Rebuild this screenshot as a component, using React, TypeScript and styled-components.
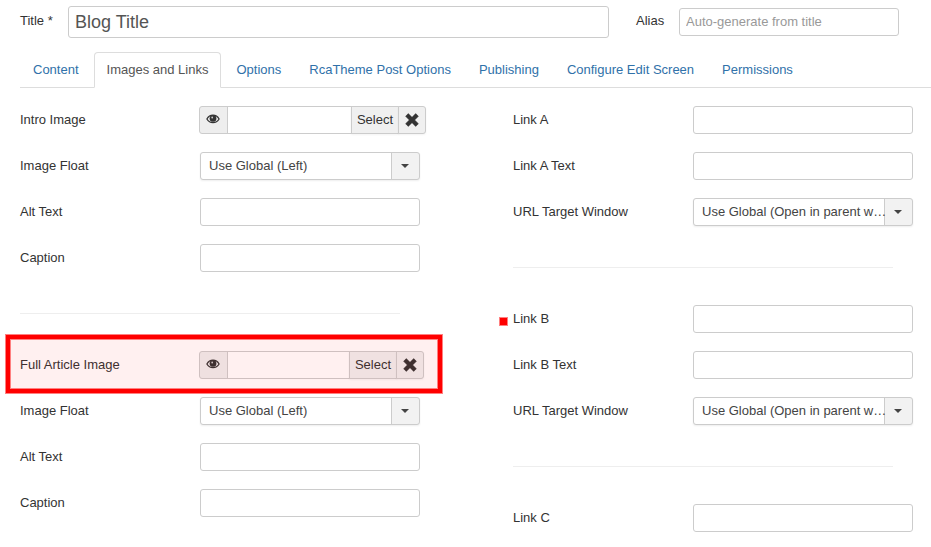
import React, { useId } from "react";
import styled, { createGlobalStyle } from "styled-components";

const GlobalStyle = createGlobalStyle`
  *, *::before, *::after { box-sizing: border-box; }
  body {
    margin: 0;
    background: #fff;
    color: #333;
    font-family: "Liberation Sans", Arial, Helvetica, sans-serif;
    font-size: 13px;
    line-height: 18px;
  }
  input, select, button { font: inherit; margin: 0; }
`;

const Page = styled.form`
  padding: 6px 0 0 20px;
`;

const Header = styled.div`
  display: flex;
  align-items: center;
  padding-right: 32px;
`;

const HeaderLabel = styled.label<{ $width: number }>`
  flex: none;
  width: ${(p) => p.$width}px;
  padding-bottom: 2px;
`;

const TextInput = styled.input`
  display: block;
  width: 220px;
  height: 28px;
  padding: 3px 6px 5px;
  border: 1px solid #ccc;
  border-radius: 3px;
  background: #fff;
  color: #555;
  outline: none;
  &::placeholder { color: #999; opacity: 1; }
  &:focus { border-color: #52a8ec; }
`;

const TitleInput = styled(TextInput)`
  flex: 1;
  min-width: 0;
  height: 32px;
  margin-right: 27px;
  padding: 4px 6px;
  font-size: 18px;
`;

const Tabs = styled.nav`
  display: flex;
  gap: 2px;
  margin-top: 14px;
  border-bottom: 1px solid #ddd;
`;

const Tab = styled.a<{ $active?: boolean }>`
  margin-bottom: -1px;
  padding: 8px 12px;
  border: 1px solid ${(p) => (p.$active ? "#ddd" : "transparent")};
  border-bottom-color: ${(p) => (p.$active ? "#fff" : "transparent")};
  border-radius: 4px 4px 0 0;
  color: ${(p) => (p.$active ? "#555" : "#3071a9")};
  text-decoration: none;
  white-space: nowrap;
`;

const Columns = styled.div`
  display: grid;
  grid-template-columns: 1fr 1fr;
  column-gap: 75px;
  padding-top: 18px;
`;

const Column = styled.div`
  min-width: 0;
`;

const Group = styled.div`
  display: flex;
  flex-direction: column;
  gap: 18px;
`;

const Divider = styled.hr`
  height: 1px;
  margin: 41px 38px 37px 0;
  border: 0;
  background: #eee;
`;

const Row = styled.div`
  position: relative;
  display: flex;
  height: 28px;
`;

const RowLabel = styled.label`
  flex: none;
  width: 180px;
  line-height: 28px;
`;

const SelectBox = styled.span`
  display: grid;
  grid-template-columns: 1fr 28px;
  width: 220px;
  height: 28px;
  border: 1px solid #ccc;
  border-radius: 3px;
  background: linear-gradient(#ccc, #ccc) right 27px top / 1px 100% no-repeat,
    linear-gradient(#f2f2f2, #f2f2f2) right / 28px 100% no-repeat, #fff;
  box-shadow: 0 1px 2px rgba(0, 0, 0, 0.07);
`;

const NativeSelect = styled.select`
  grid-area: 1 / 1 / 2 / 3;
  width: 100%;
  padding: 0 25px 0 8px;
  border: 0;
  background: transparent;
  color: #444;
  appearance: none;
  outline: none;
  white-space: nowrap;
  overflow: hidden;
  text-overflow: ellipsis;
`;

const Caret = styled.svg`
  grid-area: 1 / 2;
  place-self: center;
  pointer-events: none;
`;

const MediaGroup = styled.div`
  display: flex;
  margin-left: -1px;
  height: 28px;
`;

const Preview = styled.button`
  width: 29px;
  padding: 0 2px 3px 0;
  border: 1px solid #ccc;
  border-radius: 3px 0 0 3px;
  background: #eee;
  display: grid;
  place-items: center;
`;

const MediaInput = styled(TextInput)<{ $width: number }>`
  width: ${(p) => p.$width}px;
  margin-left: -1px;
  border-radius: 0;
`;

const SelectButton = styled.button`
  width: 48px;
  margin-left: -1px;
  padding: 0;
  border: 1px solid #ccc;
  background: #f0f0f0;
  color: #333;
  box-shadow: 0 1px 2px rgba(0, 0, 0, 0.05);
`;

const ClearButton = styled(SelectButton)`
  width: 28px;
  border-radius: 0 3px 3px 0;
  display: grid;
  place-items: center;
`;

const Highlight = styled.span`
  position: absolute;
  inset: -16px -4px -14px -14px;
  border: 4px solid #f00;
  background: rgba(255, 0, 0, 0.06);
  box-shadow: 0 0 0 1px #ff8080, inset 0 0 0 1px #ff8080;
  pointer-events: none;
`;

const Marker = styled.span`
  position: absolute;
  left: -14px;
  top: 12px;
  width: 9px;
  height: 9px;
  border: 1px solid #ff8080;
  background: #f00;
`;

function EyeIcon() {
  return (
    <svg width="14" height="10" viewBox="0 0 14 10" aria-hidden="true">
      <path
        d="M.9 5C2.400 2.400 4.500 1.200 7 1.200S11.600 2.400 13.100 5C11.600 7.500 9.500 8.700 7 8.700S2.400 7.500.9 5Z"
        fill="none"
        stroke="#333"
        strokeWidth="1.300"
        strokeLinejoin="round"
      />
      <circle cx="7" cy="4.400" r="3.400" fill="#333" />
      <circle cx="6.200" cy="3.500" r=".9" fill="#ccc" />
    </svg>
  );
}

function ClearIcon() {
  return (
    <svg width="14" height="14" viewBox="0 0 14 14" aria-hidden="true">
      <path
        fill="#333"
        d="M3.300.6 7 4.300 10.700.6 13.400 3.300 9.700 7l3.700 3.700-2.700 2.700L7 9.700l-3.700 3.700L.6 10.700 4.300 7 .6 3.300Z"
        stroke="#333"
        strokeWidth=".5"
        strokeLinejoin="round"
      />
    </svg>
  );
}

function TextField({ label, marked }: { label: string; marked?: boolean }) {
  const id = useId();
  return (
    <Row>
      {marked && <Marker />}
      <RowLabel htmlFor={id}>{label}</RowLabel>
      <TextInput id={id} type="text" />
    </Row>
  );
}

function SelectField({ label, options }: { label: string; options: string[] }) {
  const id = useId();
  return (
    <Row>
      <RowLabel htmlFor={id}>{label}</RowLabel>
      <SelectBox>
        <NativeSelect id={id}>
          {options.map((o) => (
            <option key={o}>{o}</option>
          ))}
        </NativeSelect>
        <Caret width="8" height="4" viewBox="0 0 8 4" aria-hidden="true">
          <path d="M0 0h8L4 4Z" fill="#444" />
        </Caret>
      </SelectBox>
    </Row>
  );
}

function MediaField({
  label,
  inputWidth,
  highlighted,
}: {
  label: string;
  inputWidth: number;
  highlighted?: boolean;
}) {
  const id = useId();
  return (
    <Row>
      <RowLabel htmlFor={id}>{label}</RowLabel>
      <MediaGroup>
        <Preview type="button" aria-label="Preview">
          <EyeIcon />
        </Preview>
        <MediaInput id={id} type="text" readOnly $width={inputWidth} />
        <SelectButton type="button">Select</SelectButton>
        <ClearButton type="button" aria-label="Clear">
          <ClearIcon />
        </ClearButton>
      </MediaGroup>
      {highlighted && <Highlight />}
    </Row>
  );
}

const floatOptions = ["Use Global (Left)", "Right", "Left", "None"];
const targetOptions = [
  "Use Global (Open in parent window)",
  "Open in parent window",
  "Open in new window",
];
const tabs = [
  "Content",
  "Images and Links",
  "Options",
  "RcaTheme Post Options",
  "Publishing",
  "Configure Edit Screen",
  "Permissions",
];

export default function App() {
  return (
    <>
      <GlobalStyle />
      <Page onSubmit={(e) => e.preventDefault()}>
        <Header>
          <HeaderLabel htmlFor="title" $width={48}>
            Title *
          </HeaderLabel>
          <TitleInput id="title" type="text" defaultValue="Blog Title" />
          <HeaderLabel htmlFor="alias" $width={43}>
            Alias
          </HeaderLabel>
          <TextInput id="alias" type="text" placeholder="Auto-generate from title" />
        </Header>

        <Tabs>
          {tabs.map((t) => (
            <Tab key={t} href="#" $active={t === "Images and Links"}>
              {t}
            </Tab>
          ))}
        </Tabs>

        <Columns>
          <Column>
            <Group>
              <MediaField label="Intro Image" inputWidth={125} />
              <SelectField label="Image Float" options={floatOptions} />
              <TextField label="Alt Text" />
              <TextField label="Caption" />
            </Group>
            <Divider />
            <Group>
              <MediaField label="Full Article Image" inputWidth={123} highlighted />
              <SelectField label="Image Float" options={floatOptions} />
              <TextField label="Alt Text" />
              <TextField label="Caption" />
            </Group>
          </Column>
          <Column>
            <Group>
              <TextField label="Link A" />
              <TextField label="Link A Text" />
              <SelectField label="URL Target Window" options={targetOptions} />
            </Group>
            <Divider />
            <Group>
              <TextField label="Link B" marked />
              <TextField label="Link B Text" />
              <SelectField label="URL Target Window" options={targetOptions} />
            </Group>
            <Divider />
            <Group>
              <TextField label="Link C" />
            </Group>
          </Column>
        </Columns>
      </Page>
    </>
  );
}
